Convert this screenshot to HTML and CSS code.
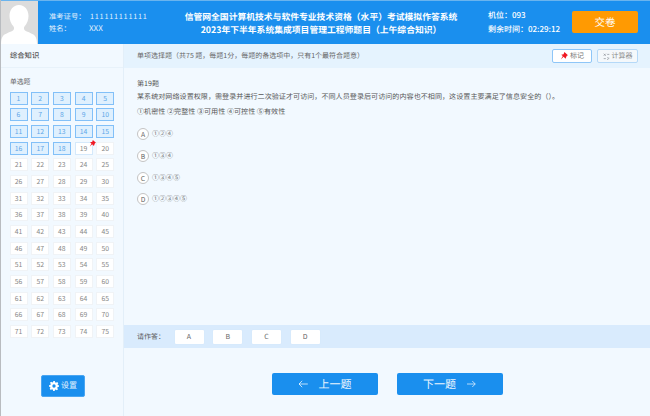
FILE: index.html
```html
<!DOCTYPE html>
<html lang="zh-CN">
<head>
<meta charset="utf-8">
<title>考试模拟作答系统</title>
<link rel="stylesheet" href="styles.css">
</head>
<body>
<div class="app">
  <header class="top">
    <div class="photo">
      <svg viewBox="0 0 38 44" width="38" height="44"><path fill="#fff" d="M19 4c6 0 9.500 5 9.500 11 0 4-1.500 8-4 10.500-.8 1-.8 3 .5 4 3 1.800 8 3 10 5.500 1.500 2 2 5 2 9H1c0-4 .5-7 2-9 2-2.500 7-3.700 10-5.500 1.300-1 1.300-3 .5-4C11 23 9.500 19 9.500 15 9.500 9 13 4 19 4z"/></svg>
    </div>
    <div class="cand">
      <div class="cand-row"><span class="cand-label">准考证号：</span><span class="cand-id">111111111111</span></div>
      <div class="cand-row"><span class="cand-label">姓名：</span><span class="cand-name">XXX</span></div>
    </div>
    <div class="title">
      <div>信管网全国计算机技术与软件专业技术资格（水平）考试模拟作答系统</div>
      <div>2023年下半年系统集成项目管理工程师题目（上午综合知识）</div>
    </div>
    <div class="seat">
      <div>机位：093</div>
      <div>剩余时间：02:29:12</div>
    </div>
    <button class="submit">交卷</button>
  </header>
  <div class="body">
    <aside class="side">
      <div class="side-head">综合知识</div>
      <div class="side-sub">单选题</div>
      <div class="grid" id="grid"></div>
      <div class="side-foot">
        <button class="settings">
          <svg viewBox="0 0 12 12" width="10" height="10"><path fill="#fff" fill-rule="evenodd" d="M5 0h2l.3 1.600 1.100.5L9.800 1.200l1.400 1.400-.9 1.400.5 1.100L12 5v2l-1.600.3-.5 1.100.9 1.400-1.400 1.400-1.400-.9-1.100.5L7 12H5l-.3-1.600-1.100-.5-1.400.9-1.400-1.400.9-1.400-.5-1.100L0 7V5l1.600-.3.5-1.100-.9-1.400 1.400-1.400 1.400.9 1.100-.5zM6 4a2 2 0 1 0 0 4 2 2 0 0 0 0-4z"/></svg>
          <span>设置</span>
        </button>
      </div>
    </aside>
    <main class="main">
      <div class="info">
        <span class="info-text">单项选择题（共75 题，每题1分，每题的备选项中，只有1个最符合题意）</span>
        <div class="tools">
          <button class="tool">
            <svg viewBox="0 0 10 10" width="8" height="8"><path fill="#f01822" d="M5.500 0l4.500 4-1.500.8-1 2.200-.5 1.500L4.500 6 1 9.500 3.500 5 1.500 3.500 3 3l1.500-.2z"/></svg>
            <span>标记</span>
          </button>
          <button class="tool tool-calc">
            <svg viewBox="0 0 10 10" width="7" height="7"><path fill="none" stroke="#8a8f96" stroke-width="1" d="M1 1l3 3M4 1L1 4M6 2h3M9 7l-3 3M6.500 7h1M7 6v1M1 8h3"/></svg>
            <span>计算器</span>
          </button>
        </div>
      </div>
      <section class="question">
        <p class="q-no">第19题</p>
        <p class="q-text">某系统对网络设置权限，需登录并进行二次验证才可访问，不同人员登录后可访问的内容也不相同，这设置主要满足了信息安全的（）。</p>
        <p class="q-text">①机密性 ②完整性 ③可用性 ④可控性 ⑤有效性</p>
        <div class="options">
          <div class="option"><span class="badge">A</span><span>①②④</span></div>
          <div class="option"><span class="badge">B</span><span>①③④</span></div>
          <div class="option"><span class="badge">C</span><span>①③④⑤</span></div>
          <div class="option"><span class="badge">D</span><span>①②③④⑤</span></div>
        </div>
      </section>
      <div class="answer">
        <span class="answer-label">请作答：</span>
        <button class="ans">A</button>
        <button class="ans">B</button>
        <button class="ans">C</button>
        <button class="ans">D</button>
      </div>
      <nav class="pager">
        <button class="page">
          <svg class="arrow-prev" viewBox="0 0 12 10" width="10" height="8"><path fill="none" stroke="#fff" stroke-width=".9" d="M12 5H1M5 1L1 5l4 4"/></svg>
          <span>上一题</span>
        </button>
        <button class="page">
          <span>下一题</span>
          <svg class="arrow-next" viewBox="0 0 12 10" width="9" height="8"><path fill="none" stroke="#fff" stroke-width=".9" d="M0 5h11M7 1l4 4-4 4"/></svg>
        </button>
      </nav>
    </main>
  </div>
</div>
<script src="grid.js"></script>
</body>
</html>
```
FILE: styles.css
```css
* { box-sizing: border-box; }
html, body { margin: 0; padding: 0; }
body {
  width: 650px;
  height: 416px;
  overflow: hidden;
  font-family: "Noto Sans CJK SC", "Liberation Sans", sans-serif;
  text-rendering: geometricPrecision;
  color: #555;
  background: #f2f9ff;
}
button { font-family: inherit; text-rendering: inherit; padding: 0; cursor: pointer; }
p { margin: 0; }

.app { display: flex; flex-direction: column; height: 416px; border-left: 1px solid #b9bcc0; }

.top {
  height: 44px;
  flex: none;
  display: flex;
  align-items: center;
  background: #1a8fee;
  border-top: 1px solid #6ab4ee;
  color: #fff;
}
.photo { width: 37px; height: 43px; background: #dcdcdc; flex: none; overflow: hidden; }
.photo svg { display: block; margin-left: -1px; }
.cand { width: 135px; flex: none; padding-left: 11px; font-size: 7.300px; line-height: 12px; color: #e3f1fd; }
.cand-row { display: flex; }
.cand-label { width: 41px; white-space: nowrap; }
.cand-id { letter-spacing: .75px; }
.cand-name { font-size: 8px; margin-left: -1px; }
.title {
  width: 300px;
  flex: none;
  text-align: center;
  font-size: 8.800px;
  font-weight: 700;
  line-height: 13px;
  margin-left: -2px;
}
.seat { width: 78px; flex: none; margin-left: 17px; font-size: 8px; font-weight: 500; line-height: 13.500px; white-space: nowrap; }
.submit {
  margin-left: 6px;
  width: 66px;
  height: 22px;
  flex: none;
  margin-top: -1px;
  border: 0;
  border-radius: 2px;
  background: #ff9a02;
  color: #fff;
  font-size: 10.500px;
}

.body { flex: 1; display: flex; min-height: 0; }

.side { width: 123px; flex: none; display: flex; flex-direction: column; border-right: 1px solid #e3eff9; }
.side-head { height: 24px; flex: none; padding-left: 9px; font-size: 7.300px; font-weight: 500; line-height: 24px; color: #555; border-bottom: 1px solid #e8f2fa; }
.side-sub { padding: 8px 0 0 9px; font-size: 6.800px; line-height: 10px; color: #666; }
.grid { display: grid; grid-template-columns: repeat(5, 18px); grid-auto-rows: 13px; column-gap: 3.700px; row-gap: 3.700px; padding: 5.500px 0 0 8.500px; }
.cell {
  border: 1px solid #f0f3f6;
  background: #fff;
  font-size: 6.800px;
  line-height: 11px;
  text-align: center;
  color: #888;
  position: relative;
}
.cell-done { background: #dff0fe; border-color: #82c0f8; color: #5ea7e8; }
.cell-current { border-color: #d5e9fb; }
.flag { position: absolute; right: -4px; top: -3px; width: 7px; height: 7px; }
.flag svg { display: block; }
.side-foot { flex: 1; display: flex; justify-content: center; padding: 36.500px 0 0 2px; }
.settings {
  width: 44px;
  height: 22px;
  border: 1px solid #4aa6f2;
  border-radius: 2px;
  background: #1a8fee;
  color: #e3f1fd;
  font-size: 8px;
  display: flex;
  align-items: center;
  justify-content: center;
  gap: 2px;
}

.main { flex: 1; display: flex; flex-direction: column; min-width: 0; }
.info { height: 24px; flex: none; display: flex; align-items: center; padding: 0 12px 0 13px; background: #e5f3fe; }
.info-text { flex: 1; font-size: 7px; color: #666; white-space: nowrap; }
.tools { display: flex; gap: 5px; }
.tool {
  width: 40px;
  height: 14.500px;
  border: 1px solid #8ec6f8;
  border-radius: 2px;
  background: #fff;
  color: #777;
  font-size: 7px;
  display: flex;
  align-items: center;
  justify-content: center;
  gap: 2px;
}
.tool-calc { width: 41px; background: #f4f8fb; border-color: #b5d9f8; color: #888; }

.question { flex: 1; padding: 11px 0 0 13px; font-size: 7.100px; color: #555; }
.q-no { line-height: 11px; }
.q-text { line-height: 14.500px; white-space: nowrap; }
.options { display: flex; flex-direction: column; gap: 9.800px; margin-top: 9px; }
.option { display: flex; align-items: center; gap: 3px; height: 12px; color: #777; font-size: 7px; }
.badge {
  width: 12px;
  height: 12px;
  border: 1px solid #c4c4c4;
  border-radius: 50%;
  background: #fff;
  font-size: 6.800px;
  line-height: 10px;
  text-align: center;
  color: #666;
  flex: none;
}

.answer {
  height: 23px;
  flex: none;
  display: flex;
  align-items: center;
  padding-left: 13px;
  background: #d9ebfd;
  font-size: 7px;
  color: #555;
}
.answer-label { width: 37.500px; flex: none; white-space: nowrap; }
.ans {
  width: 29px;
  height: 14px;
  margin-right: 9.700px;
  border: 0;
  border-radius: 1px;
  background: #fff;
  color: #666;
  font-size: 7px;
  box-shadow: 0 0 1px #c9dff3;
}

.pager { height: 68px; flex: none; display: flex; justify-content: center; gap: 19px; padding: 25px 0 0 0; }
.page {
  width: 106px;
  height: 22px;
  border: 0;
  border-radius: 2px;
  background: #1a8fee;
  color: #e9f4fe;
  font-size: 11px;
  display: flex;
  align-items: center;
  justify-content: center;
  gap: 11px;
}
```
FILE: grid.js
```js
var grid = document.getElementById('grid');
for (var i = 1; i <= 75; i++) {
  var c = document.createElement('div');
  c.className = 'cell' + (i <= 18 ? ' cell-done' : '') + (i === 19 ? ' cell-current' : '');
  c.textContent = i;
  if (i === 19) {
    var f = document.createElement('span');
    f.className = 'flag';
    f.innerHTML = '<svg viewBox="0 0 10 10" width="7" height="7"><path fill="#f01822" d="M5.500 0l4.500 4-1.500.8-1 2.200-.5 1.500L4.500 6 1 9.500 3.500 5 1.500 3.500 3 3l1.500-.2z"/></svg>';
    c.appendChild(f);
  }
  grid.appendChild(c);
}
```
